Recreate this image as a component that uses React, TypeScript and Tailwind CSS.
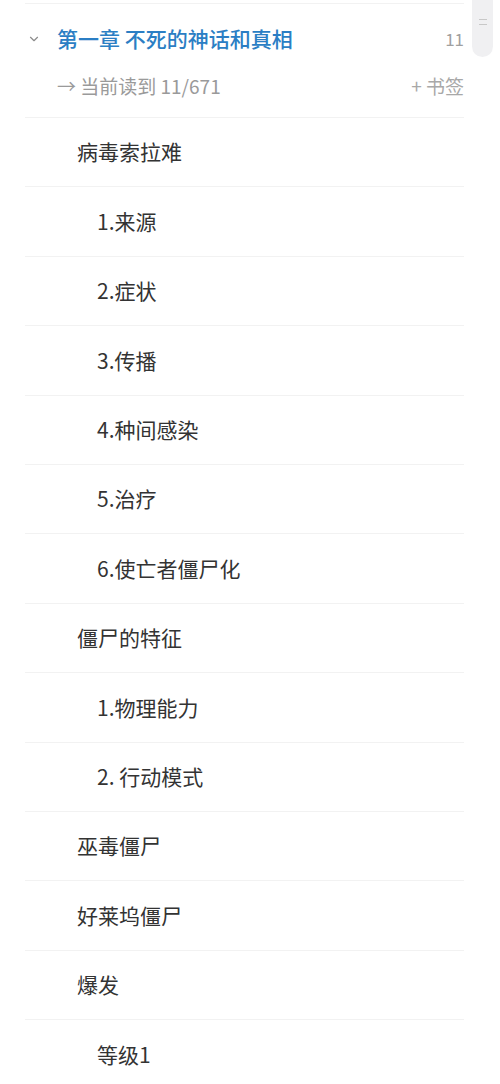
import React from 'react';

type Item = { title: string; level: 1 | 2 };

const items: Item[] = [
  { title: '病毒索拉难', level: 1 },
  { title: '1.来源', level: 2 },
  { title: '2.症状', level: 2 },
  { title: '3.传播', level: 2 },
  { title: '4.种间感染', level: 2 },
  { title: '5.治疗', level: 2 },
  { title: '6.使亡者僵尸化', level: 2 },
  { title: '僵尸的特征', level: 1 },
  { title: '1.物理能力', level: 2 },
  { title: '2. 行动模式', level: 2 },
  { title: '巫毒僵尸', level: 1 },
  { title: '好莱坞僵尸', level: 1 },
  { title: '爆发', level: 1 },
  { title: '等级1', level: 2 },
];

const font = { fontFamily: '"Noto Sans CJK SC", Roboto, sans-serif' };

export default function App() {
  return (
    <div className="relative w-[500px] h-[1084px] overflow-hidden bg-white" style={font}>
      {/* scroll handle */}
      <div className="absolute right-[7px] top-[-20px] w-[21px] h-[77px] rounded-full bg-[#f0f0f2] flex items-end justify-center pb-[32px]">
        <div className="flex flex-col gap-[4px]">
          <div className="w-[8px] h-[1px] bg-[#c8c8c8]" />
          <div className="w-[8px] h-[1px] bg-[#c8c8c8]" />
        </div>
      </div>

      <div className="ml-[25px] mr-[36px] pt-[3px]">
        <div className="border-t border-[#f2f2f2]" />

        {/* chapter header */}
        <div className="flex items-center h-[70px]">
          <svg width="14" height="14" viewBox="0 0 24 24" fill="none" stroke="#8c8c8c" strokeWidth="2" strokeLinecap="round" strokeLinejoin="round" className="ml-[2px] mr-[16px]">
            <polyline points="6 9 12 15 18 9" />
          </svg>
          <span className="text-[21px] font-medium text-[#2b7ec4] flex-1">第一章 不死的神话和真相</span>
          <span className="text-[17px] text-[#a0a0a0]">11</span>
        </div>
        <div className="flex items-center h-[44px] pl-[32px] pb-[18px] border-b border-[#f2f2f2]">
          <span className="text-[19px] text-[#9a9a9a] flex-1">→ 当前读到 11/671</span>
          <span className="text-[19px] text-[#a8a8a8]">+ 书签</span>
        </div>

        {items.map((it, i) => (
          <div
            key={i}
            className={`flex items-center h-[69.4px] text-[21px] text-[#333333] ${i < items.length - 1 ? 'border-b border-[#f2f2f2]' : ''} ${it.level === 1 ? 'pl-[52px]' : 'pl-[72px]'}`}
          >
            {it.title}
          </div>
        ))}
      </div>
    </div>
  );
}
